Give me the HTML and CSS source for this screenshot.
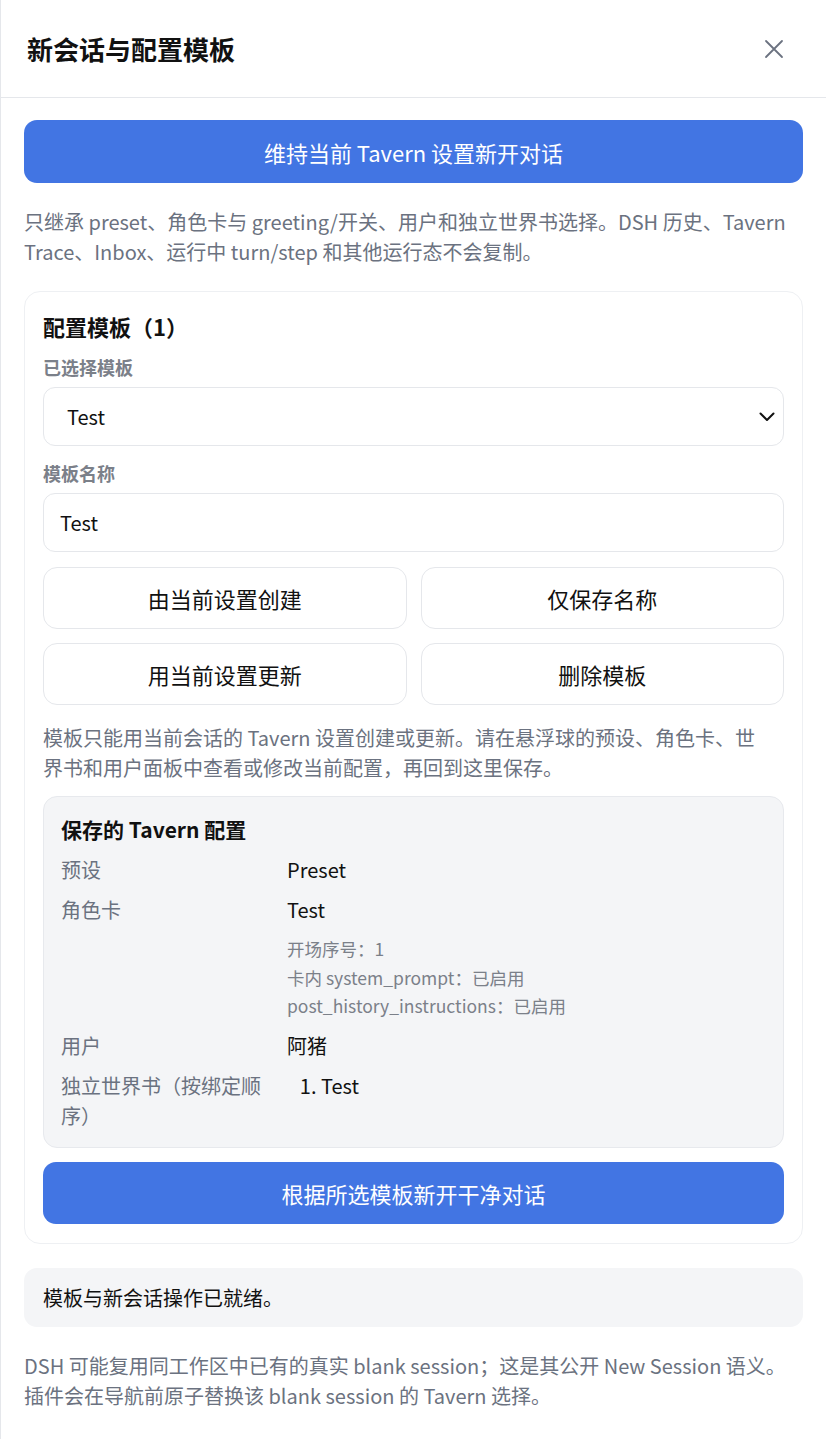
FILE: index.html
```html
<!DOCTYPE html>
<html lang="zh-CN">
<head>
<meta charset="utf-8">
<title>新会话与配置模板</title>
<link rel="stylesheet" href="styles.css">
</head>
<body>
<div class="panel">
  <header class="header">
    <h1 class="title">新会话与配置模板</h1>
    <button class="close" aria-label="关闭">
      <svg width="20" height="20" viewBox="0 0 20 20"><path d="M2 2 L18 18 M18 2 L2 18" stroke="#6b7280" stroke-width="1.8" fill="none" stroke-linecap="round"/></svg>
    </button>
  </header>
  <main class="content">
    <button class="btn-primary">维持当前 Tavern 设置新开对话</button>
    <p class="muted">只继承 preset、角色卡与 greeting/开关、用户和独立世界书选择。DSH 历史、Tavern Trace、Inbox、运行中 turn/step 和其他运行态不会复制。</p>

    <section class="card">
      <h2 class="card-title">配置模板（1）</h2>
      <div class="field first">
        <div class="label">已选择模板</div>
        <div class="select">
          <span>Test</span>
          <svg width="16" height="10" viewBox="0 0 16 10"><path d="M1.5 1.5 L8 8 L14.5 1.5" stroke="#111" stroke-width="2" fill="none" stroke-linecap="round" stroke-linejoin="round"/></svg>
        </div>
      </div>
      <div class="field second">
        <div class="label">模板名称</div>
        <input class="input" type="text" value="Test">
      </div>
      <div class="btn-grid">
        <button class="btn">由当前设置创建</button>
        <button class="btn">仅保存名称</button>
        <button class="btn">用当前设置更新</button>
        <button class="btn">删除模板</button>
      </div>
      <p class="muted help">模板只能用当前会话的 Tavern 设置创建或更新。请在悬浮球的预设、角色卡、世界书和用户面板中查看或修改当前配置，再回到这里保存。</p>

      <div class="saved">
        <h3 class="saved-title">保存的 Tavern 配置</h3>
        <dl class="rows">
          <dt>预设</dt>
          <dd>Preset</dd>
          <dt>角色卡</dt>
          <dd>Test
            <div class="sub">
              <div>开场序号：1</div>
              <div>卡内 system_prompt：已启用</div>
              <div>post_history_instructions：已启用</div>
            </div>
          </dd>
          <dt>用户</dt>
          <dd>阿猪</dd>
          <dt>独立世界书（按绑定顺序）</dt>
          <dd><ol class="books"><li>Test</li></ol></dd>
        </dl>
      </div>

      <button class="btn-primary in-card">根据所选模板新开干净对话</button>
    </section>

    <div class="status">模板与新会话操作已就绪。</div>
    <p class="muted">DSH 可能复用同工作区中已有的真实 blank session；这是其公开 New Session 语义。插件会在导航前原子替换该 blank session 的 Tavern 选择。</p>
  </main>
</div>
</body>
</html>
```
FILE: styles.css
```css
* { box-sizing: border-box; }
html, body { margin: 0; padding: 0; background: #fff; }
body {
  font-family: "Noto Sans CJK SC", "Noto Sans", sans-serif;
  color: #111827;
  font-size: 20px;
}
.panel {
  min-height: 1439px;
  border-left: 1px solid #e5e7eb;
}
.header {
  height: 98px;
  border-bottom: 1px solid #e5e7eb;
  display: flex;
  align-items: center;
  justify-content: space-between;
  padding: 0 42px 0 26px;
}
.title {
  margin: 0;
  font-size: 26px;
  font-weight: 700;
  color: #111;
  line-height: 1;
}
.close {
  background: none;
  border: 0;
  padding: 0;
  width: 20px;
  height: 20px;
  display: flex;
  align-items: center;
  justify-content: center;
}
.content {
  padding: 22px 23px 40px 23px;
  display: flex;
  flex-direction: column;
  gap: 24px;
}
.btn-primary {
  height: 63px;
  width: 100%;
  border: 0;
  border-radius: 13px;
  background: #4275e3;
  color: #fff;
  font-family: inherit;
  font-size: 22px;
}
.muted {
  margin: 0;
  color: #6b7280;
  font-size: 20px;
  line-height: 30px;
}
.card {
  border: 1px solid #eef0f3;
  border-radius: 16px;
  padding: 17px 18px 19px;
  display: flex;
  flex-direction: column;
}
.card-title {
  margin: 0;
  font-size: 22px;
  line-height: 34px;
  font-weight: 700;
  color: #111;
}
.field { display: flex; flex-direction: column; gap: 6px; }
.field.first { margin-top: 10px; }
.field.second { margin-top: 13px; }
.label {
  font-size: 18px;
  line-height: 28px;
  font-weight: 700;
  color: #7b8089;
}
.select, .input {
  height: 59px;
  border: 1px solid #e5e7eb;
  border-radius: 12px;
  background: #fff;
  font-family: inherit;
  font-size: 20px;
  color: #111;
}
.select {
  display: flex;
  align-items: center;
  justify-content: space-between;
  padding: 0 8px 0 23px;
}
.input {
  width: 100%;
  padding: 0 16px;
  outline: none;
}
.btn-grid {
  margin-top: 15px;
  display: grid;
  grid-template-columns: 1fr 1fr;
  gap: 14px;
}
.btn {
  height: 62px;
  border: 1px solid #e5e7eb;
  border-radius: 14px;
  background: #fff;
  font-family: inherit;
  font-size: 22px;
  color: #111;
}
.help { margin-top: 18px; padding-right: 12px; }
.saved {
  margin-top: 13px;
  background: #f4f5f7;
  border: 1px solid #e7e9ed;
  border-radius: 14px;
  padding: 17px 17px 16px;
}
.saved-title {
  margin: 0;
  font-size: 21px;
  line-height: 31px;
  font-weight: 700;
  color: #111;
}
.rows {
  margin: 10px 0 0;
  display: grid;
  grid-template-columns: 210px 1fr;
  column-gap: 16px;
  row-gap: 10px;
  font-size: 20px;
  line-height: 30px;
}
.rows dt { color: #6b7280; margin: 0; }
.rows dd { color: #111; margin: 0; }
.sub {
  margin-top: 10px;
  font-size: 17.5px;
  line-height: 28.7px;
  color: #7b8089;
}
.books {
  margin: 0;
  padding-left: 34px;
}
.btn-primary.in-card {
  margin-top: 14px;
  height: 62px;
}
.status {
  background: #f4f5f7;
  border-radius: 13px;
  height: 59px;
  display: flex;
  align-items: center;
  padding: 0 19px;
  font-size: 20px;
  color: #111;
}
```
